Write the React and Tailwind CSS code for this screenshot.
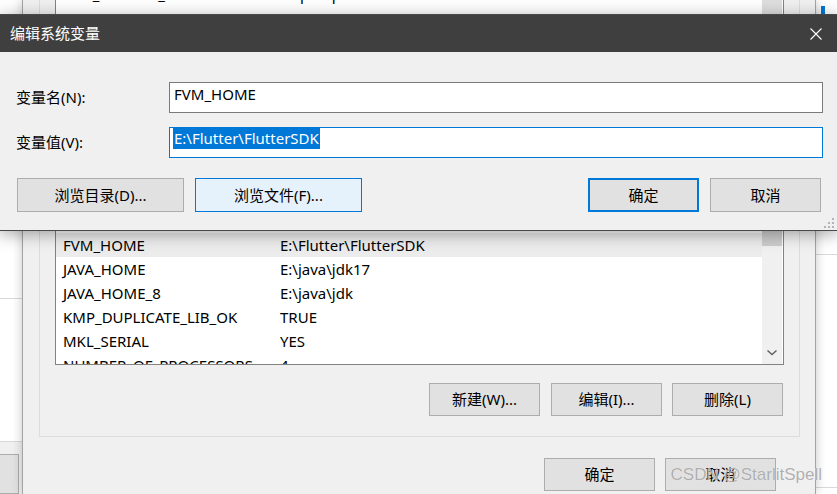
import React from "react";

function Btn({ children, className }) {
  return (
    <div className={`flex items-center justify-center text-[15px] text-black ${className}`}>
      {children}
    </div>
  );
}

const sysRows = [
  ["FVM_HOME", "E:\\Flutter\\FlutterSDK", true],
  ["JAVA_HOME", "E:\\java\\jdk17"],
  ["JAVA_HOME_8", "E:\\java\\jdk"],
  ["KMP_DUPLICATE_LIB_OK", "TRUE"],
  ["MKL_SERIAL", "YES"],
  ["NUMBER_OF_PROCESSORS", "4"],
];

function Row({ name, value, selected }) {
  return (
    <div className={`flex h-[24px] shrink-0 items-center text-[15px] text-black ${selected ? "bg-[#ececec]" : ""}`}>
      <div className="w-[224px] shrink-0 pl-[7px] whitespace-nowrap">{name}</div>
      <div className="whitespace-nowrap">{value}</div>
    </div>
  );
}

export default function App() {
  return (
    <div className="relative h-[494px] w-[837px] overflow-hidden bg-white font-['Noto_Sans','Noto_Sans_CJK_SC',sans-serif]">
      {/* background desktop layer */}
      <div className="flex h-full">
        {/* left window strip */}
        <div className="flex w-[22px] shrink-0 flex-col bg-white">
          <div className="h-[303px]" />
          <div className="h-[145px] border-t border-[#d9d9d9]" />
          <div className="flex-1 border-t border-[#d9d9d9] bg-[#f0f0f0] pt-[12px]">
            <div className="-ml-[2px] h-[40px] w-[21px] border border-[#adadad] bg-[#e1e1e1]" />
          </div>
        </div>

        {/* environment variables window (behind) */}
        <div className="relative z-10 flex w-[794px] shrink-0 flex-col border-x border-[#a3a3a3] bg-[#f0f0f0] shadow-[0_0_10px_rgba(0,0,0,0.22)]">
          <div className="ml-[16px] flex w-[761px] flex-col border-x border-b border-[#dcdcdc] px-[15px] pb-[20px]">
            {/* list view */}
            <div className="flex h-[365px] border-x border-b border-[#828282] bg-white">
              <div className="flex w-[706px] flex-col overflow-hidden">
                <div className="h-[233px] shrink-0 overflow-hidden">
                  <div className="-mt-[18px]">
                    <Row name="PUB_HOSTED_URL" value="https://pub.flutter-io.cn" />
                    <div className="mt-[4px]">
                      <Row name="TEMP" value="%USERPROFILE%\AppData\Local\Temp" />
                    </div>
                  </div>
                </div>
                {sysRows.map(([n, v, s]) => (
                  <Row key={n} name={n} value={v} selected={s} />
                ))}
              </div>
              <div className="flex w-[20px] flex-col">
                <div className="h-[231px] bg-[#dedede]" />
                <div className="h-[15px] bg-[#cdcdcd]" />
                <div className="flex flex-1 flex-col justify-end bg-[#f0f0f0] pb-[8px]">
                  <svg width="20" height="7" viewBox="0 0 20 7" className="block">
                    <path d="M5.5 1.5 L10 5.5 L14.5 1.5" fill="none" stroke="#606060" strokeWidth="1.5" />
                  </svg>
                </div>
              </div>
              <div className="w-[1px]" />
            </div>
            {/* buttons */}
            <div className="mt-[18px] flex h-[33px] justify-end pr-[1px]">
              <Btn className="w-[111px] border border-[#adadad] bg-[#e1e1e1]">新建(W)...</Btn>
              <Btn className="ml-[11px] w-[111px] border border-[#adadad] bg-[#e1e1e1]">编辑(I)...</Btn>
              <Btn className="ml-[10px] w-[111px] border border-[#adadad] bg-[#e1e1e1]">删除(L)</Btn>
            </div>
          </div>
          <div className="mt-[21px] flex h-[33px] justify-end pr-[39px]">
            <Btn className="w-[111px] border border-[#adadad] bg-[#e1e1e1]">确定</Btn>
            <Btn className="ml-[10px] w-[111px] border border-[#adadad] bg-[#e1e1e1]">取消</Btn>
          </div>
        </div>

        {/* right window strip */}
        <div className="flex w-[21px] shrink-0 flex-col bg-white">
          <div className="h-[254px] pl-[5px] pt-[6px]">
            <div className="h-[8px] w-[4px] bg-[#0078d7]" />
          </div>
          <div className="h-[233px] border-t border-[#d9d9d9]" />
          <div className="flex-1 border-t border-[#d9d9d9]" />
        </div>
      </div>

      {/* edit dialog (front window) */}
      <div className="absolute left-[-1px] top-[14px] z-20 w-[839px] border border-[#484848] bg-[#f0f0f0] shadow-[0_3px_16px_rgba(0,0,0,0.35)]">
        <div className="flex h-[37px] items-center justify-between bg-[#3f3f3f]">
          <div className="pl-[10px] text-[15px] text-white">编辑系统变量</div>
          <div className="flex h-full w-[42px] items-center justify-center">
            <svg width="12" height="12" viewBox="0 0 12 12">
              <path d="M0.5 0.5 L11.5 11.5 M11.5 0.5 L0.5 11.5" stroke="#ffffff" strokeWidth="1.1" fill="none" />
            </svg>
          </div>
        </div>
        <div className="relative h-[178px] pt-[30px]">
          <div className="flex h-[31px] items-center">
            <div className="w-[169px] shrink-0 pl-[16px] text-[15px] text-black">变量名(N):</div>
            <div className="flex h-full w-[654px] items-start border border-[#7a7a7a] bg-white pl-[4px] pt-[1px]">
              <span className="text-[15px] leading-[21px] text-black">FVM_HOME</span>
            </div>
          </div>
          <div className="mt-[14px] flex h-[31px] items-center">
            <div className="w-[169px] shrink-0 pl-[16px] text-[15px] text-black">变量值(V):</div>
            <div className="flex h-full w-[654px] items-start border border-[#0078d7] bg-white pl-[3px]">
              <span className="bg-[#0078d7] pr-[1px] pl-[1px] text-[15px] leading-[21px] text-white">E:\Flutter\FlutterSDK</span>
            </div>
          </div>
          <div className="mt-[20px] flex h-[34px] pl-[17px] pr-[16px]">
            <Btn className="w-[167px] border border-[#adadad] bg-[#e1e1e1]">浏览目录(D)...</Btn>
            <Btn className="ml-[11px] w-[167px] border border-[#0078d7] bg-[#e5f1fb]">浏览文件(F)...</Btn>
            <div className="flex-1" />
            <Btn className="w-[111px] border-2 border-[#0078d7] bg-[#e1e1e1]">确定</Btn>
            <Btn className="ml-[11px] w-[111px] border border-[#adadad] bg-[#e1e1e1]">取消</Btn>
          </div>
          <svg className="absolute bottom-[1px] right-[2px]" width="11" height="11" viewBox="0 0 11 11">
            <rect x="8" y="0" width="2" height="2" fill="#b4b4b4" />
            <rect x="4" y="4" width="2" height="2" fill="#b4b4b4" />
            <rect x="8" y="4" width="2" height="2" fill="#b4b4b4" />
            <rect x="0" y="8" width="2" height="2" fill="#b4b4b4" />
            <rect x="4" y="8" width="2" height="2" fill="#b4b4b4" />
            <rect x="8" y="8" width="2" height="2" fill="#b4b4b4" />
          </svg>
        </div>
      </div>

      {/* watermark */}
      <div className="pointer-events-none absolute bottom-[7px] right-[15px] z-30 font-['Liberation_Sans',sans-serif] text-[17px] text-[#8c8c8c]/70 [text-shadow:0_0_1px_#ffffff]">
        CSDN @StarlitSpell
      </div>
    </div>
  );
}
